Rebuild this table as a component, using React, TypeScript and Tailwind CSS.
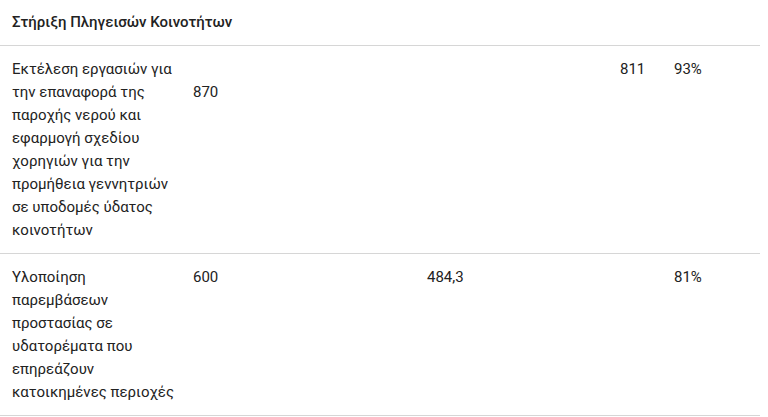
export default function App() {
  const rows = [
    {
      name: "Εκτέλεση εργασιών για την επαναφορά της παροχής νερού και εφαρμογή σχεδίου χορηγιών για την προμήθεια γεννητριών σε υποδομές ύδατος κοινοτήτων",
      a: "870",
      b: "",
      c: "811",
      d: "93%",
    },
    {
      name: "Υλοποίηση παρεμβάσεων προστασίας σε υδατορέματα που επηρεάζουν κατοικημένες περιοχές",
      a: "600",
      b: "484,3",
      c: "",
      d: "81%",
    },
  ];
  return (
    <div className="w-[768px] bg-white text-[#222] font-['Roboto',sans-serif] text-[15px] leading-[23px]">
      <table className="w-[760px] border-collapse table-fixed">
        <colgroup>
          <col className="w-[185px]" />
          <col className="w-[234px]" />
          <col className="w-[193px]" />
          <col className="w-[54px]" />
          <col className="w-[94px]" />
        </colgroup>
        <thead>
          <tr className="border-b border-[#d6d6d6]">
            <th colSpan={5} className="text-left font-medium text-[15px] pl-3 pt-[11px] pb-[11px]">
              Στήριξη Πληγεισών Κοινοτήτων
            </th>
          </tr>
        </thead>
        <tbody>
          {rows.map((r, i) => (
            <tr key={i} className="border-b border-[#d6d6d6] align-top">
              <td className="pl-3 pr-[5px] pt-[12px] pb-[11px]">{r.name}</td>
              <td className={`pl-2 ${i === 0 ? "pt-[35px]" : "pt-[12px]"}`}>{r.a}</td>
              <td className="pl-2 pt-[12px]">{r.b}</td>
              <td className="pl-2 pt-[12px]">{r.c}</td>
              <td className="pl-2 pt-[12px]">{r.d}</td>
            </tr>
          ))}
        </tbody>
      </table>
    </div>
  );
}
